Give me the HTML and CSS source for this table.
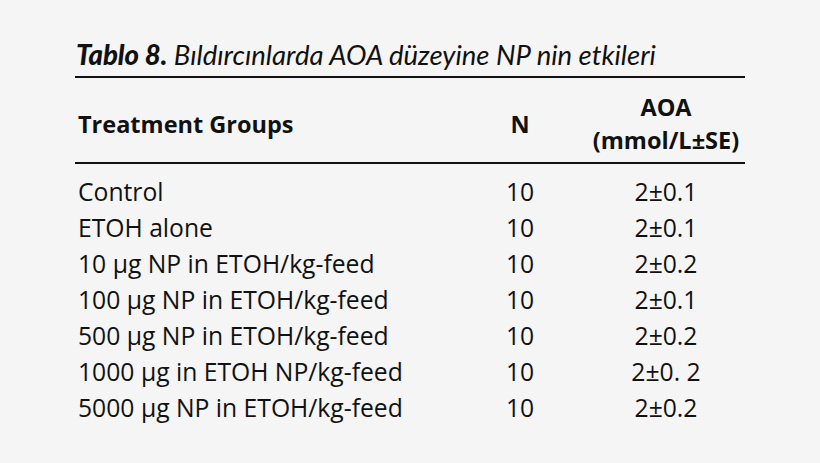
FILE: index.html
```html
<!DOCTYPE html>
<html>
<head>
<meta charset="utf-8">
<link rel="stylesheet" href="styles.css">
</head>
<body>
<div class="wrap">
  <div class="caption"><b>Tablo 8.</b> Bıldırcınlarda AOA düzeyine NP nin etkileri</div>
  <table class="tbl">
    <thead>
      <tr>
        <th class="c1">Treatment Groups</th>
        <th class="c2">N</th>
        <th class="c3">AOA<br>(mmol/L±SE)</th>
      </tr>
    </thead>
    <tbody>
      <tr><td class="c1">Control</td><td class="c2">10</td><td class="c3">2±0.1</td></tr>
      <tr><td class="c1">ETOH alone</td><td class="c2">10</td><td class="c3">2±0.1</td></tr>
      <tr><td class="c1">10 µg NP in ETOH/kg-feed</td><td class="c2">10</td><td class="c3">2±0.2</td></tr>
      <tr><td class="c1">100 µg NP in ETOH/kg-feed</td><td class="c2">10</td><td class="c3">2±0.1</td></tr>
      <tr><td class="c1">500 µg NP in ETOH/kg-feed</td><td class="c2">10</td><td class="c3">2±0.2</td></tr>
      <tr><td class="c1">1000 µg in ETOH NP/kg-feed</td><td class="c2">10</td><td class="c3">2±0. 2</td></tr>
      <tr><td class="c1">5000 µg NP in ETOH/kg-feed</td><td class="c2">10</td><td class="c3">2±0.2</td></tr>
    </tbody>
  </table>
</div>
</body>
</html>
```
FILE: styles.css
```css
html, body {
  margin: 0;
  padding: 0;
  background: #f5f5f5;
}
body {
  font-family: "Open Sans", "Noto Sans", sans-serif;
  color: #111;
  width: 820px;
  height: 463px;
  overflow: hidden;
}
.wrap {
  padding: 40px 0 0 75px;
  width: 670px;
}
.caption {
  font-family: "Lato", "Open Sans", sans-serif;
  font-style: italic;
  font-size: 27.5px;
  line-height: 30px;
  padding-left: 1px;
  padding-bottom: 6px;
  border-bottom: 2px solid #111;
}
.caption b {
  font-weight: 900;
}
.tbl {
  width: 670px;
  border-collapse: collapse;
  font-size: 24.7px;
}
.tbl th {
  font-size: 23.5px;
  font-weight: 700;
  line-height: 33px;
  height: 76px;
  padding: 8px 0 0 0;
  border-bottom: 2px solid #111;
  vertical-align: middle;
}
.tbl td {
  line-height: 36px;
  padding: 0;
}
.tbl tbody tr:first-child td {
  padding-top: 10px;
}
.tbl .c1 {
  text-align: left;
  padding-left: 3px;
  width: 387px;
}
.tbl .c2 {
  text-align: center;
  width: 110px;
}
.tbl .c3 {
  text-align: center;
  padding-left: 12px;
}
```
